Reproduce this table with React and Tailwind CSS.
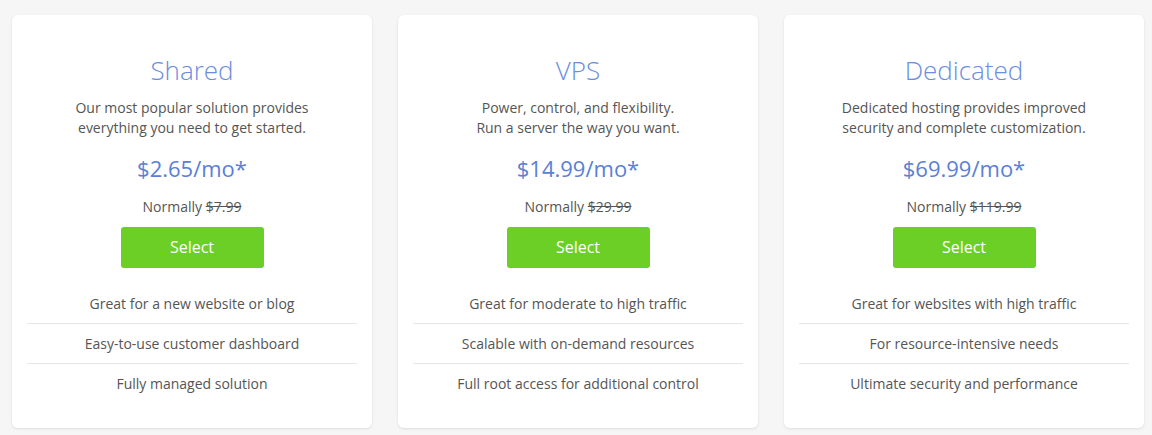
import React from "react";

const plans = [
  {
    name: "Shared",
    desc: ["Our most popular solution provides", "everything you need to get started."],
    price: "$2.65/mo*",
    normal: "$7.99",
    features: ["Great for a new website or blog", "Easy-to-use customer dashboard", "Fully managed solution"],
  },
  {
    name: "VPS",
    desc: ["Power, control, and flexibility.", "Run a server the way you want."],
    price: "$14.99/mo*",
    normal: "$29.99",
    features: ["Great for moderate to high traffic", "Scalable with on-demand resources", "Full root access for additional control"],
  },
  {
    name: "Dedicated",
    desc: ["Dedicated hosting provides improved", "security and complete customization."],
    price: "$69.99/mo*",
    normal: "$119.99",
    features: ["Great for websites with high traffic", "For resource-intensive needs", "Ultimate security and performance"],
  },
];

export default function App() {
  return (
    <div
      className="w-[1152px] h-[435px] bg-[#f6f6f6] flex gap-[26px] pl-[12px] pt-[15px] overflow-hidden"
      style={{ fontFamily: '"Open Sans", "Liberation Sans", sans-serif' }}
    >
      {plans.map((p) => (
        <div
          key={p.name}
          className="w-[360px] h-[413px] bg-white rounded-[6px] shadow-[0_1px_3px_rgba(0,0,0,0.10)] flex flex-col items-center pt-[40px] px-[15px] pb-[25px] text-center"
        >
          <div className="text-[26px] leading-[30px] font-light text-[#6b8de0]">{p.name}</div>
          <div className="mt-[13px] text-[14px] leading-[20px] text-[#555]">
            {p.desc.map((l) => (
              <div key={l}>{l}</div>
            ))}
          </div>
          <div className="mt-[15px] text-[22px] leading-[30px] text-[#5a80d6]">{p.price}</div>
          <div className="mt-[14px] text-[14px] leading-[20px] text-[#555]">
            Normally <span className="line-through">{p.normal}</span>
          </div>
          <button className="mt-[10px] w-[143px] h-[41px] rounded-[3px] bg-[#6bcf26] text-white text-[16px] leading-[41px]">
            Select
          </button>
          <div className="mt-[15px] w-full flex flex-col">
            {p.features.map((f, i) => (
              <div
                key={f}
                className={`h-[40px] flex items-center justify-center text-[14px] text-[#555] ${i > 0 ? "border-t border-[#e6e6e6]" : ""}`}
              >
                {f}
              </div>
            ))}
          </div>
        </div>
      ))}
    </div>
  );
}
